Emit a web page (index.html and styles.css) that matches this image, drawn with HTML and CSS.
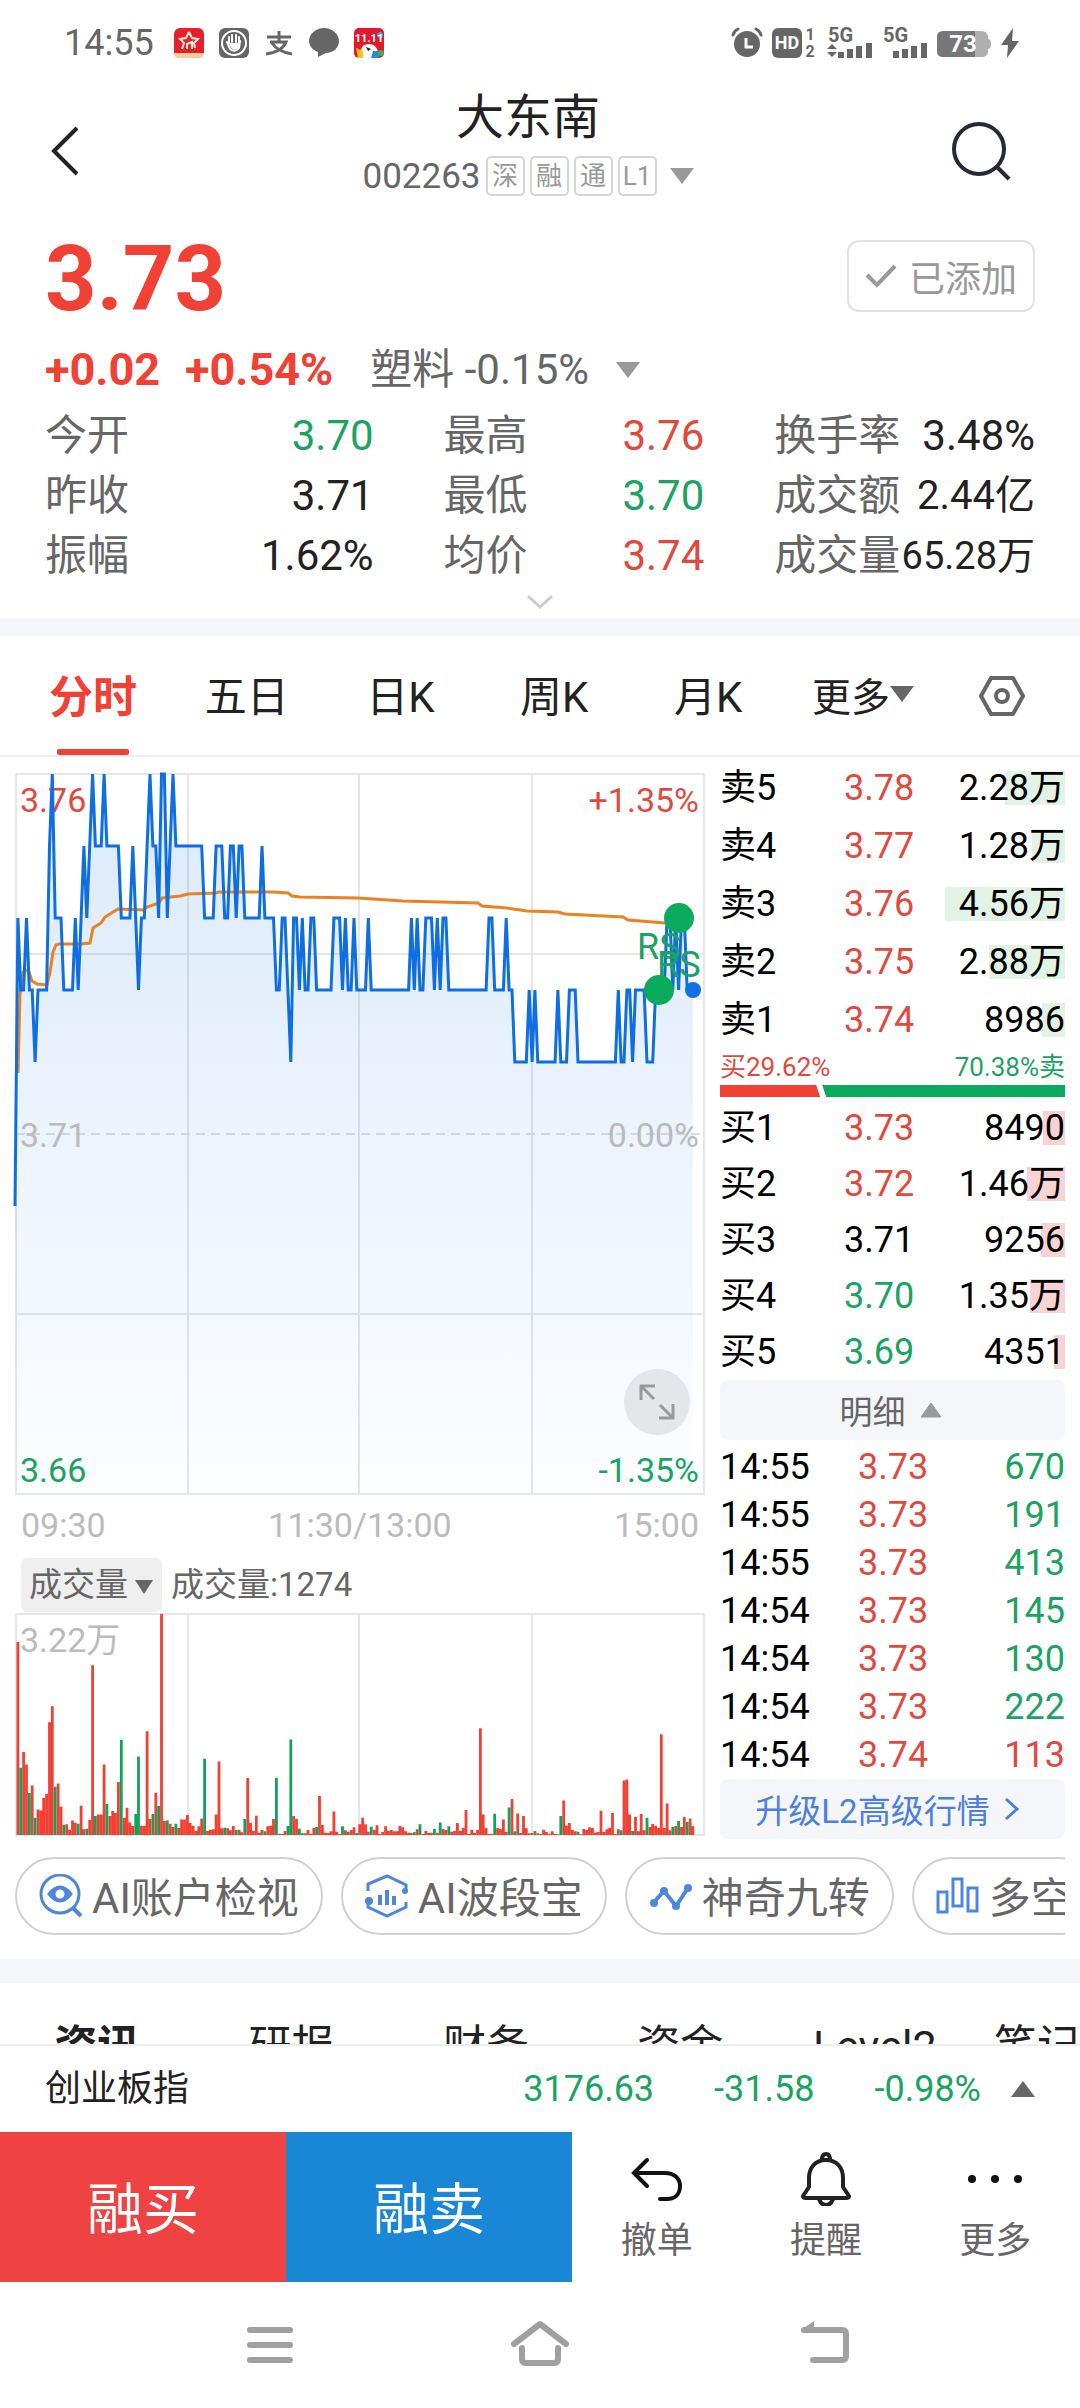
FILE: index.html
```html
<!DOCTYPE html>
<html lang="zh-CN">
    <head>
        <meta charset="UTF-8">
        <meta name="viewport" content="width=device-width">
        <title>大东南 002263</title>
        <link rel="stylesheet" href="styles.css">
    </head>
    <body>
        <section class="statusbar">
            <span class="clock">14:55</span>
            <div class="notices">
                <svg width="30" height="30" viewBox="0 0 30 30">
                    <rect width="30" height="30" rx="6" fill="#e5202b"/>
                    <path d="M0 25h30a6 6 0 0 1-6 5H6a6 6 0 0 1-6-5z" fill="#f6cf9e"/>
                    <path d="M15 4l3 6 6 1-4 4 1 5M15 4l-3 6-6 1 4 4-2 6M13 21v-5l5-2v7" fill="none" stroke="#ffe9d6" stroke-width="2"/>
                </svg>
                <svg width="30" height="30" viewBox="0 0 30 30">
                    <rect width="30" height="30" rx="6" fill="#666"/>
                    <circle cx="15" cy="15" r="12" fill="none" stroke="#fff" stroke-width="2"/>
                    <path d="M10 15V9M13 14V7M17 14V7M20 15V9M8 14l3 7q5 4 9-1l1-7" fill="none" stroke="#fff" stroke-width="2" stroke-linecap="round"/>
                    <path d="M10 15h10v4q-4 5-8 1z" fill="#fff"/>
                </svg>
                <svg width="30" height="30" viewBox="0 0 30 30">
                    <path d="M3 9h24M15 3v10M6 14h16q-4 10-20 12M8 15q6 9 20 11" fill="none" stroke="#666" stroke-width="3"/>
                </svg>
                <svg width="30" height="30" viewBox="0 0 30 30">
                    <path d="M15 0c8 0 15 6 15 13s-6 12-13 12l-8 4v-5C4 22 0 18 0 13 0 6 7 0 15 0z" fill="#666"/>
                </svg>
                <svg width="30" height="30" viewBox="0 0 30 30">
                    <rect width="30" height="30" rx="5" fill="#e3182c"/>
                    <circle cx="26" cy="7" r="3" fill="#3aa0e8"/>
                    <path d="M7 22q1-6 8-6t9 8v6H9z" fill="#fff"/>
                    <path d="M2 20l7 3v7H4z" fill="#fbc51d"/>
                    <path d="M19 23h6v7h-8z" fill="#2a8bdc"/>
                    <circle cx="27" cy="25" r="3" fill="#3cb34a"/>
                    <path d="M12 19l5 2-3 2z" fill="#222"/>
                    <text x="15" y="14" class="promo">11.11</text>
                </svg>
            </div>
            <div class="signals">
                <svg width="32" height="30" viewBox="0 0 32 30">
                    <circle cx="16" cy="16" r="13" fill="#666"/>
                    <path d="M2 7q1-4 5-6M30 7q-1-4-5-6" fill="none" stroke="#666" stroke-width="3" stroke-linecap="round"/>
                    <path d="M15 10v9h7" fill="none" stroke="#fff" stroke-width="3"/>
                </svg>
                <svg width="46" height="30" viewBox="0 0 46 30">
                    <rect width="30" height="30" rx="6" fill="#666"/>
                    <text x="15" y="21" class="hd">HD</text>
                    <text x="38" y="12" class="sim">1</text>
                    <text x="38" y="29" class="sim">2</text>
                </svg>
                <svg width="46" height="30" viewBox="0 0 46 30">
                    <text x="1" y="14" class="net">5G</text>
                    <path d="M0 21l5-5 5 5zM0 24h10l-5 5z" fill="#666"/>
                    <path d="M14 30v-6M23 30V21M32 30V18M42 30V15" stroke="#666" stroke-width="6"/>
                </svg>
                <svg width="46" height="30" viewBox="0 0 46 30">
                    <text x="1" y="14" class="net">5G</text>
                    <path d="M14 30v-7M23 30V21M32 30V18M42 30V15" stroke="#666" stroke-width="6"/>
                </svg>
                <svg width="54" height="30" viewBox="0 0 54 30">
                    <path d="M44 3q7 0 7 6v2q3 0 3 5t-3 5v2q0 6-7 6z" fill="#b0b0b0"/>
                    <path d="M6 3h32v26H6q-6 0-6-6V9q0-6 6-6z" fill="#777"/>
                    <path d="M38 3h7v26h-7z" fill="#b0b0b0"/>
                    <text x="26" y="24" class="battery">73</text>
                </svg>
                <svg width="20" height="30" viewBox="0 0 20 30">
                    <path d="M13 0L1 17h7L7 30l12-17h-7z" fill="#666"/>
                </svg>
            </div>
        </section>

        <header class="header">
            <button class="icon-btn back" aria-label="返回">
                <svg width="30" height="52" viewBox="0 0 30 52"><path d="M27 3L4 26l23 23" fill="none" stroke="#222" stroke-width="4"/></svg>
            </button>
            <div class="title">
                <h1>大东南</h1>
                <div class="code">
                    <span>002263</span>
                    <span class="tags"><i>深</i><i>融</i><i>通</i><i>L1</i></span>
                    <svg width="24" height="16" viewBox="0 0 24 16"><path d="M0 0h24L12 16z" fill="#999"/></svg>
                </div>
            </div>
            <button class="icon-btn search" aria-label="搜索">
                <svg width="60" height="60" viewBox="0 0 60 60">
                    <circle cx="28" cy="28" r="25" fill="none" stroke="#262a38" stroke-width="4"/>
                    <path d="M45 45l13 13" stroke="#262a38" stroke-width="4"/>
                </svg>
            </button>
        </header>

        <section class="quote">
            <div class="price-row">
                <strong class="price">3.73</strong>
                <button class="added">
                    <svg width="32" height="26" viewBox="0 0 32 26"><path d="M2 12l10 10L30 3" fill="none" stroke="#999" stroke-width="4"/></svg>
                    已添加
                </button>
            </div>
            <div class="change-row">
                <b>+0.02</b>
                <b>+0.54%</b>
                <span>塑料 -0.15%</span>
                <svg width="24" height="16" viewBox="0 0 24 16"><path d="M0 0h24L12 16z" fill="#999"/></svg>
            </div>
            <dl class="stats">
                <div><dt>今开</dt><dd class="down">3.70</dd></div>
                <div><dt>最高</dt><dd class="up">3.76</dd></div>
                <div><dt>换手率</dt><dd>3.48%</dd></div>
                <div><dt>昨收</dt><dd>3.71</dd></div>
                <div><dt>最低</dt><dd class="down">3.70</dd></div>
                <div><dt>成交额</dt><dd class="fit">2.44亿</dd></div>
                <div><dt>振幅</dt><dd>1.62%</dd></div>
                <div><dt>均价</dt><dd class="up">3.74</dd></div>
                <div><dt>成交量</dt><dd class="fit long">65.28万</dd></div>
            </dl>
            <div class="unfold">
                <svg width="28" height="16" viewBox="0 0 28 16"><path d="M2 2l12 11L26 2" fill="none" stroke="#ccc" stroke-width="3"/></svg>
            </div>
        </section>

        <nav class="periods">
            <div class="period-list">
                <button class="active">分时</button>
                <button>五日</button>
                <button>日K</button>
                <button>周K</button>
                <button>月K</button>
            </div>
            <button class="more">更多<svg width="24" height="16" viewBox="0 0 24 16"><path d="M0 0h24L12 16z" fill="#666"/></svg></button>
            <button class="setting" aria-label="设置">
                <svg width="48" height="42" viewBox="0 0 48 42">
                    <path d="M13 3h22l10 18-10 18H13L3 21z" fill="none" stroke="#666" stroke-width="4" stroke-linejoin="round"/>
                    <circle cx="24" cy="21" r="6" fill="none" stroke="#666" stroke-width="4"/>
                </svg>
            </button>
        </nav>

        <main class="market">
            <div class="charts">
                <div class="price-chart">
                    <svg viewBox="0 0 688 720">
                        <defs>
                            <linearGradient id="fade" x1="0" y1="0" x2="0" y2="720" gradientUnits="userSpaceOnUse">
                                <stop offset="0" stop-color="#0f6fe4" stop-opacity="0.15"/>
                                <stop offset="1" stop-color="#0f6fe4" stop-opacity="0.01"/>
                            </linearGradient>
                        </defs>
                        <path class="grid" d="M0 0H688V720H0ZM172 0V720M343 0V720M516 0V720M0 180H688M0 540H688"/>
                        <path class="grid dash" d="M0 360H688"/>
                        <polygon id="area" fill="url(#fade)"/>
                        <text class="label up" x="4" y="38">3.76</text>
                        <text class="label up end" x="683" y="38">+1.35%</text>
                        <text class="label flat" x="4" y="373">3.71</text>
                        <text class="label flat end" x="683" y="373">0.00%</text>
                        <text class="label down" x="4" y="708">3.66</text>
                        <text class="label down end" x="683" y="708">-1.35%</text>
                        <polyline class="average" points="2,299 4,220 7,198 11,196 13,198 16,207 21,210 31,211 34,198 37,178 40,171 43,170 64,170 74,169 77,154 85,149 89,143 102,135 128,136 131,133 143,129 146,124 164,122 172,120 200,119 203,118 257,118 272,119 276,122 284,123 342,124 387,127 424,128 462,129 466,132 491,134 511,137 542,138 549,140 607,143 612,146 649,149"/>
                        <polyline id="line" class="line"/>
                        <circle cx="663" cy="144" r="15" fill="#0aab5c"/>
                        <circle cx="643" cy="216" r="15" fill="#0aab5c"/>
                        <circle cx="677" cy="216" r="8" fill="#0f6fe4"/>
                        <text class="mark" x="621" y="185">RS</text>
                        <text class="mark" x="641" y="203">RS</text>
                    </svg>
                    <button class="expand" aria-label="全屏">
                        <svg width="36" height="36" viewBox="0 0 36 36"><path d="M2 16V2h14M3 3l12 12M34 20v14H20M33 33L21 21" fill="none" stroke="#999" stroke-width="3"/></svg>
                    </button>
                </div>
                <div class="axis"><span>09:30</span><span>11:30/13:00</span><span>15:00</span></div>
                <div class="indicator">
                    <div class="picker">
                        <select aria-label="指标"><option>成交量</option></select>
                        <svg width="18" height="14" viewBox="0 0 18 14"><path d="M0 0h18L9 14z" fill="#666"/></svg>
                    </div>
                    <span>成交量:1274</span>
                </div>
                <svg class="volume-chart" viewBox="0 0 688 221">
                    <path class="grid" d="M0 0H688V221H0ZM172 0V221M343 0V221M516 0V221"/>
                    <text class="label flat" x="4" y="38">3.22万</text>
                    <path id="volUp" fill="#f04134"/>
                    <path id="volDown" fill="#0fa45a"/>
                </svg>
            </div>

            <aside class="book">
                <table class="orders sell">
                    <tr><th>卖5</th><td class="up">3.78</td><td class="vol" style="--w:60px">2.28万</td></tr>
                    <tr><th>卖4</th><td class="up">3.77</td><td class="vol" style="--w:33px">1.28万</td></tr>
                    <tr><th>卖3</th><td class="up">3.76</td><td class="vol" style="--w:120px">4.56万</td></tr>
                    <tr><th>卖2</th><td class="up">3.75</td><td class="vol" style="--w:76px">2.88万</td></tr>
                    <tr><th>卖1</th><td class="up">3.74</td><td class="vol" style="--w:23px">8986</td></tr>
                </table>
                <div class="ratio"><span class="up">买29.62%</span><span class="down">70.38%卖</span></div>
                <div class="ratio-bar"><i class="buy-part" style="width:29.62%"></i><i class="sell-part"></i></div>
                <table class="orders buy">
                    <tr><th>买1</th><td class="up">3.73</td><td class="vol" style="--w:22px">8490</td></tr>
                    <tr><th>买2</th><td class="up">3.72</td><td class="vol" style="--w:38px">1.46万</td></tr>
                    <tr><th>买3</th><td>3.71</td><td class="vol" style="--w:24px">9256</td></tr>
                    <tr><th>买4</th><td class="down">3.70</td><td class="vol" style="--w:35px">1.35万</td></tr>
                    <tr><th>买5</th><td class="down">3.69</td><td class="vol" style="--w:11px">4351</td></tr>
                </table>
                <button class="bar-btn">明细<svg width="22" height="16" viewBox="0 0 22 16"><path d="M11 1L21 15H1z" fill="#999" stroke="#999" stroke-linejoin="round"/></svg></button>
                <table class="ticks">
                    <tr><th>14:55</th><td class="up">3.73</td><td class="down">670</td></tr>
                    <tr><th>14:55</th><td class="up">3.73</td><td class="down">191</td></tr>
                    <tr><th>14:55</th><td class="up">3.73</td><td class="down">413</td></tr>
                    <tr><th>14:54</th><td class="up">3.73</td><td class="down">145</td></tr>
                    <tr><th>14:54</th><td class="up">3.73</td><td class="down">130</td></tr>
                    <tr><th>14:54</th><td class="up">3.73</td><td class="down">222</td></tr>
                    <tr><th>14:54</th><td class="up">3.74</td><td class="up">113</td></tr>
                </table>
                <a class="bar-btn level2" href="#level2">升级L2高级行情<svg width="16" height="24" viewBox="0 0 16 24"><path d="M2 2l11 10L2 22" fill="none" stroke="#4a80e0" stroke-width="3"/></svg></a>
            </aside>
        </main>

        <section class="tools">
            <button>
                <svg width="44" height="44" viewBox="0 0 44 44" fill="none" stroke="#4f86dd" stroke-width="3">
                    <circle cx="21" cy="20" r="19"/><path d="M34 34l8 8" stroke-width="4"/>
                    <path d="M10 20q11-14 22 0q-11 14-22 0z" fill="#4f86dd"/><circle cx="21" cy="20" r="3" fill="#fff" stroke="#fff"/>
                </svg>
                <span>AI账户检视</span>
            </button>
            <button>
                <svg width="44" height="44" viewBox="0 0 44 44" fill="none" stroke="#4f86dd" stroke-width="3">
                    <path d="M3 17V10L22 2l19 9v6M3 27v6l19 9 19-9v-5"/>
                    <path d="M15 21v10M22 16v15M29 22v9" stroke-width="4"/>
                    <circle cx="40" cy="17" r="3" fill="#4f86dd" stroke="none"/><circle cx="4" cy="27" r="4" fill="#4f86dd" stroke="none"/>
                </svg>
                <span>AI波段宝</span>
            </button>
            <button>
                <svg width="44" height="44" viewBox="0 0 44 44" fill="none" stroke="#4f86dd" stroke-width="4">
                    <path d="M5 28l10-11 12 15 12-18"/>
                    <g fill="#4f86dd" stroke="none"><circle cx="5" cy="29" r="4"/><circle cx="15" cy="17" r="4"/><circle cx="27" cy="32" r="4"/><circle cx="39" cy="14" r="4"/></g>
                </svg>
                <span>神奇九转</span>
            </button>
            <button>
                <svg width="44" height="44" viewBox="0 0 44 44" fill="none" stroke="#4f86dd" stroke-width="3">
                    <path d="M2 18h9v20H2zM17 5h9v27h-9zM32 14h9v23h-9z"/>
                </svg>
                <span>多空</span>
            </button>
        </section>

        <nav class="info-tabs">
            <a class="active" href="#news">资讯</a>
            <a href="#report">研报</a>
            <a href="#finance">财务</a>
            <a href="#fund">资金</a>
            <a href="#level2">Level2</a>
            <a href="#notes">笔记</a>
        </nav>

        <footer>
            <div class="index-bar">
                <span class="name">创业板指</span>
                <span>3176.63</span>
                <span>-31.58</span>
                <span>-0.98%</span>
                <svg width="24" height="16" viewBox="0 0 24 16"><path d="M12 0l12 16H0z" fill="#666"/></svg>
            </div>
            <div class="actions">
                <button class="buy-btn">融买</button>
                <button class="sell-btn">融卖</button>
                <button class="act">
                    <svg width="54" height="54" viewBox="0 0 54 54"><path d="M17 8L4 21l13 13M5 21h30c9 0 15 5 15 13s-5 13-13 13h-7" fill="none" stroke="#111" stroke-width="4" stroke-linecap="round"/></svg>
                    撤单
                </button>
                <button class="act">
                    <svg width="54" height="54" viewBox="0 0 54 54" fill="none" stroke="#222" stroke-width="4" stroke-linejoin="round">
                        <path d="M27 8c-11 0-17 8-17 18v9L4 44q0 2 3 2h40q3 0 3-2l-6-9v-9C44 16 38 8 27 8z"/>
                        <path d="M23 8q0-6 4-6t4 6M20 47q2 6 7 6t7-6"/>
                    </svg>
                    提醒
                </button>
                <button class="act">
                    <svg width="58" height="54" viewBox="0 0 58 54"><circle cx="6" cy="27" r="4"/><circle cx="29" cy="27" r="4"/><circle cx="52" cy="27" r="4"/></svg>
                    更多
                </button>
            </div>
            <div class="sysnav">
                <svg width="80" height="50" viewBox="0 0 80 50"><path d="M20 10h40M20 25h40M20 40h40" stroke="#a0a0a0" stroke-width="6" stroke-linecap="round"/></svg>
                <svg width="80" height="50" viewBox="0 0 80 50"><path d="M14 24L40 4l26 20M22 28v11q0 4 4 4h28q4 0 4-4V28" fill="none" stroke="#a0a0a0" stroke-width="6" stroke-linecap="round" stroke-linejoin="round"/></svg>
                <svg width="80" height="50" viewBox="0 0 80 50"><path d="M34 10h38q4 0 4 4v22q0 4-4 4H43" fill="none" stroke="#a0a0a0" stroke-width="6" stroke-linecap="round"/><path d="M31 10l13-9v12H34z" fill="#a0a0a0"/></svg>
            </div>
        </footer>
        <script src="chart.js"></script>
    </body>
</html>
```
FILE: styles.css
```css
* {
    box-sizing: border-box;
}
body {
    margin: 0;
    background: #fff;
    color: #222;
    font-family: Roboto, "Noto Sans CJK SC", sans-serif;
    font-size: 36px;
    overflow-x: hidden;
}
button {
    margin: 0;
    padding: 0;
    border: none;
    background: none;
    color: inherit;
    font: inherit;
    cursor: pointer;
}
a {
    color: inherit;
    text-decoration: none;
}
svg {
    display: block;
    flex: none;
}
.up {
    color: #e04a3e;
    fill: #e04a3e;
}
.down {
    color: #1ba362;
    fill: #1ba362;
}

/* phone status bar */
.statusbar {
    display: flex;
    align-items: center;
    height: 86px;
    padding: 0 60px 0 64px;
    color: #666;
}
.clock {
    line-height: 36px;
}
.notices {
    display: flex;
    gap: 15px;
    margin-left: 20px;
}
.signals {
    display: flex;
    gap: 9px;
    margin-left: auto;
}
.statusbar svg {
    overflow: visible;
}
.statusbar text {
    font-weight: bold;
    fill: #666;
}
.statusbar .promo {
    font-size: 11px;
    text-anchor: middle;
    fill: #fff;
}
.statusbar .hd {
    font-size: 18px;
    text-anchor: middle;
    fill: #fff;
}
.sim {
    font-size: 16px;
    text-anchor: middle;
}
.net {
    font-size: 20px;
}
.statusbar .battery {
    font-size: 24px;
    text-anchor: middle;
    fill: #fff;
}

.header {
    display: flex;
    align-items: center;
}
.icon-btn {
    display: flex;
    align-items: center;
    padding-top: 13px;
}
.back {
    width: 120px;
    padding-left: 50px;
}
.search {
    width: 144px;
    padding-left: 15px;
}
.title {
    flex: 1;
    text-align: center;
}
.title h1 {
    margin: 0;
    font-size: 48px;
    font-weight: normal;
    line-height: 64px;
}
.code {
    display: flex;
    align-items: center;
    justify-content: center;
    height: 52px;
    color: #666;
    font-size: 35px;
}
.tags {
    display: flex;
    gap: 5px;
    margin: 0 13px 0 5px;
}
.tags i {
    width: 39px;
    border: 2px solid #d5d5d5;
    border-radius: 5px;
    color: #999;
    font-size: 26px;
    font-style: normal;
    line-height: 36px;
    text-align: center;
}

.quote {
    padding: 38px 45px 0;
    border-bottom: 18px solid #f5f6f9;
}
.price-row {
    display: flex;
    justify-content: space-between;
    align-items: flex-start;
}
.price {
    color: #f04134;
    font-size: 90px;
    line-height: 80px;
}
.added {
    display: flex;
    align-items: center;
    justify-content: center;
    gap: 12px;
    width: 188px;
    height: 72px;
    border: 2px solid #e2e2e2;
    border-radius: 12px;
    color: #999;
}
.change-row {
    display: flex;
    align-items: center;
    margin-top: 20px;
    font-size: 42px;
    line-height: 60px;
}
.change-row b {
    margin-right: 25px;
    color: #f04134;
    font-size: 45px;
}
.change-row span {
    margin: 0 27px 0 12px;
    color: #666;
}
.stats {
    display: grid;
    grid-template-columns: 329fr 261fr 261fr;
    column-gap: 70px;
    margin: 6px 0 0;
    font-size: 42px;
    line-height: 60px;
}
.stats div {
    display: flex;
    justify-content: space-between;
    white-space: nowrap;
}
.stats dt {
    color: #666;
}
.stats dd {
    margin: 0;
}
.stats .fit {
    font-size: 40px;
}
.stats .long {
    font-size: 38px;
}
.unfold {
    display: flex;
    align-items: center;
    justify-content: center;
    height: 32px;
}

.periods {
    display: flex;
    align-items: center;
    padding: 0 54px 0 16px;
    border-bottom: 2px solid #eee;
    font-size: 42px;
}
.period-list {
    display: grid;
    grid-template-columns: repeat(5, 1fr);
    flex: 1;
}
.period-list button {
    position: relative;
    height: 119px;
    padding-bottom: 4px;
}
.period-list .active {
    color: #f04134;
    font-size: 44px;
    font-weight: bold;
}
.period-list .active::after {
    content: "";
    position: absolute;
    left: calc(50% - 36px);
    bottom: 0;
    width: 72px;
    height: 6px;
    border-radius: 2px;
    background: #f04134;
}
.more {
    display: flex;
    align-items: center;
    margin: 0 64px 0 27px;
    padding-bottom: 3px;
    font-size: 39px;
}

/* charts on the left, order book on the right */
.market {
    display: flex;
    gap: 16px;
    padding: 2px 15px 0 16px;
}
.charts {
    flex: 1;
    min-width: 0;
    padding-top: 15px;
}
.charts > svg,
.price-chart > svg {
    width: 100%;
    height: auto;
    overflow: visible;
}
.price-chart {
    position: relative;
}
.grid {
    fill: none;
    stroke: #e5e6e9;
    stroke-width: 2;
}
.dash {
    stroke: #dcdfe6;
    stroke-dasharray: 9 6;
}
.label {
    font-size: 34px;
}
.end {
    text-anchor: end;
}
.flat {
    fill: #bbb;
}
.mark {
    fill: #1ba362;
    font-size: 36px;
}
.line {
    fill: none;
    stroke: #0f6fe0;
    stroke-width: 3;
}
.average {
    fill: none;
    stroke: #ea8220;
    stroke-width: 3;
}
.expand {
    position: absolute;
    right: 14px;
    bottom: 59px;
    display: flex;
    align-items: center;
    justify-content: center;
    width: 66px;
    height: 66px;
    border-radius: 50%;
    background: #e4e6e9;
}
.axis {
    display: flex;
    justify-content: space-between;
    padding: 0 5px;
    color: #bbb;
    font-size: 34px;
    line-height: 62px;
}
.indicator {
    display: flex;
    align-items: center;
    gap: 9px;
    height: 58px;
    padding-left: 5px;
    color: #666;
    font-size: 33px;
    line-height: 54px;
}
.picker {
    position: relative;
}
.picker select {
    appearance: none;
    width: 141px;
    height: 54px;
    padding: 0 0 0 8px;
    border: none;
    border-radius: 6px;
    background: #efefef;
    color: #666;
    font: inherit;
}
.picker svg {
    position: absolute;
    right: 9px;
    top: 22px;
    pointer-events: none;
}

.book {
    width: 345px;
    color: #000;
}
.book table {
    width: 100%;
    table-layout: fixed;
    border-collapse: collapse;
}
.book th,
.book td {
    padding: 0;
    font-weight: normal;
    text-align: left;
    white-space: nowrap;
}
.book th {
    width: 124px;
}
.book td:last-child {
    text-align: right;
}
.orders td:nth-child(2) {
    width: 90px;
}
.sell th,
.sell td {
    height: 58px;
    line-height: 58px;
}
.buy th,
.buy td {
    height: 56px;
    line-height: 56px;
}
.vol {
    background: linear-gradient(#e2f3e5, #e2f3e5) right center / var(--w) 34px no-repeat;
}
.buy .vol {
    background-image: linear-gradient(#f9d3d3, #f9d3d3);
}
.ratio {
    display: flex;
    justify-content: space-between;
    font-size: 26px;
    line-height: 36px;
}
.ratio-bar {
    display: flex;
    height: 12px;
    margin-bottom: 3px;
}
.buy-part {
    background: #f04134;
    clip-path: polygon(0 0, calc(100% - 6px) 0, calc(100% - 2px) 100%, 0 100%);
}
.sell-part {
    flex: 1;
    background: #0aab5c;
    clip-path: polygon(0 0, 100% 0, 100% 100%, 4px 100%);
}
.bar-btn {
    display: flex;
    align-items: center;
    justify-content: center;
    gap: 14px;
    width: 100%;
    height: 60px;
    padding-right: 4px;
    border-radius: 8px;
    background: #f5f6f9;
    color: #666;
    font-size: 33px;
}
.level2 {
    padding-right: 10px;
    color: #4a80e0;
}
.book .ticks {
    margin: 3px 0 0;
}
.ticks th {
    width: 138px;
}
.ticks td {
    height: 48px;
    line-height: 48px;
}

.tools {
    display: flex;
    gap: 18px;
    margin: 18px 15px 24px;
    overflow: hidden;
}
.tools button {
    display: flex;
    flex: none;
    align-items: center;
    gap: 9px;
    height: 78px;
    padding: 0 22px;
    border: 2px solid #d0d0d0;
    border-radius: 39px;
    color: #666;
    font-size: 42px;
    white-space: nowrap;
}
.tools span {
    padding-bottom: 4px;
}
.info-tabs {
    display: flex;
    height: 85px;
    padding-top: 33px;
    border-top: 24px solid #f5f6f9;
    overflow: hidden;
    font-size: 43px;
    line-height: 60px;
}
.info-tabs a {
    flex: 0 0 18%;
    text-align: center;
}
.info-tabs a:last-child {
    flex: 1;
    text-align: right;
}
.info-tabs .active {
    font-weight: bold;
}

.index-bar {
    display: flex;
    align-items: center;
    gap: 60px;
    height: 88px;
    padding: 0 45px;
    border-top: 2px solid #eee;
    color: #1ba362;
    line-height: 48px;
}
.index-bar .name {
    margin-right: auto;
    color: #222;
}
.index-bar svg {
    margin-left: -30px;
}
.actions {
    display: flex;
    height: 150px;
}
.buy-btn,
.sell-btn {
    width: 286px;
    padding-bottom: 5px;
    color: #fff;
    font-size: 56px;
}
.buy-btn {
    background: #ef4242;
}
.sell-btn {
    background: #1986d6;
}
.act {
    display: flex;
    flex: 1;
    flex-direction: column;
    align-items: center;
    justify-content: center;
    gap: 11px;
    padding-top: 2px;
    color: #666;
    line-height: 48px;
}
.act circle {
    fill: #111;
}
.sysnav {
    display: grid;
    grid-template-columns: repeat(3, 1fr);
    justify-items: center;
    align-items: center;
    height: 126px;
    padding: 0 12.5%;
}
```
FILE: chart.js
```js
// price per minute, in cents above 3.70; "3x4" is 3.73 for four minutes
var prices = "0 4 3x2 4 3x2 2 3x4 5 6 4x3 3x4 4 3 4 5 4 5 6 5x3 6 5x5 4x4 5 4 3 4x2 5 6 5x2 4 6x2 4 5 6 5x10 " +
    "4x4 5x3 4x2 5x2 4 5x2 4x6 5 4x4 3x2 4x2 3 2 4x2 3 4 3x2 4x2 3x6 4x3 3 4 3x2 4 3x4 4 3x14 4 3 4 3x2 4x3 " +
    "3 4 3 4x2 3x14 4x2 3x4 4 3x2 2x5 3 2 3 2x7 3 2x3 3x3 2x14 3 2x2 3x2 2 3x4 2x3 3x4 4x2 3 4 3 4x2 3x3";

// volume bars from the first minute, "g" marks a falling minute
var volumes = "580 202g 249 212 126g 149 52g 77 74 111 123 339 387 145g 155 86 31g 32 16 44 37 34g 88 17 19g 45 510 57g 62 62 " +
    "212 93g 57 72 66 159 286g 52 82 38 27 63g 236g 28 28 312 48 63g 127 87g 664 42 44g 34 24 34g 21 47 47 60 36 28 12 26 50 " +
    "229g 12 16 17 62 221 20 22g 20 14 27 15g 16 8 48g 171 37 12 58 7 15 11g 26 28 48 172g 4 3 12 27g 287g 57 48 19g 5g 5 15 4 21 " +
    "24g 117 30 7 6 11 71 10 3 26g 14 10g 15 23 6g 32 52 32 10 25g 16 29 3 9 26 12 15 11 11 28 23 11 7 6 8g 17 32g 3 12 6 7 18g 7 " +
    "38g 18 15 26g 10 12 36 12 21 75 3 16 6 15 321 62 21 3 4 64g 21 18 47 9 83g 108 11g 65 6 57 20 5 6g 12 5g 3 16 9 4 11 3 2 57g " +
    "104 28 36 15 11 10g 2 18 15 23 21 7 9 73 9 17 22 66 3 17 14g 164 167 62 12g 55 11 63 14 52g 24 33 28 21 303 21 95 14 24g 27 " +
    "42g 24 54 39g 50 26";

var step = 688 / 239.5;

function drawPrice() {
    var points = [];
    var minute = 0;
    prices.split(" ").forEach(function (run) {
        var part = run.split("x");
        for (var n = 0; n < (part[1] || 1); n++) {
            points.push((minute * step - 1).toFixed(1) + "," + (432 - part[0] * 72));
            minute++;
        }
    });
    var last = (minute - 1) * step - 1;
    document.getElementById("line").setAttribute("points", points.join(" "));
    document.getElementById("area").setAttribute("points", "0,720 " + points.join(" ") + " " + last + ",720");
}

function drawVolume() {
    var up = "";
    var down = "";
    volumes.split(" ").forEach(function (item, i) {
        var h = parseInt(item) / 664 * 221;
        var bar = "M" + ((i + 1) * step - 2.4).toFixed(1) + " 221v-" + h.toFixed(1) + "h2.8V221z";
        if (item.indexOf("g") > 0) {
            down += bar;
        } else {
            up += bar;
        }
    });
    document.getElementById("volUp").setAttribute("d", up);
    document.getElementById("volDown").setAttribute("d", down);
}

drawPrice();
drawVolume();
```
